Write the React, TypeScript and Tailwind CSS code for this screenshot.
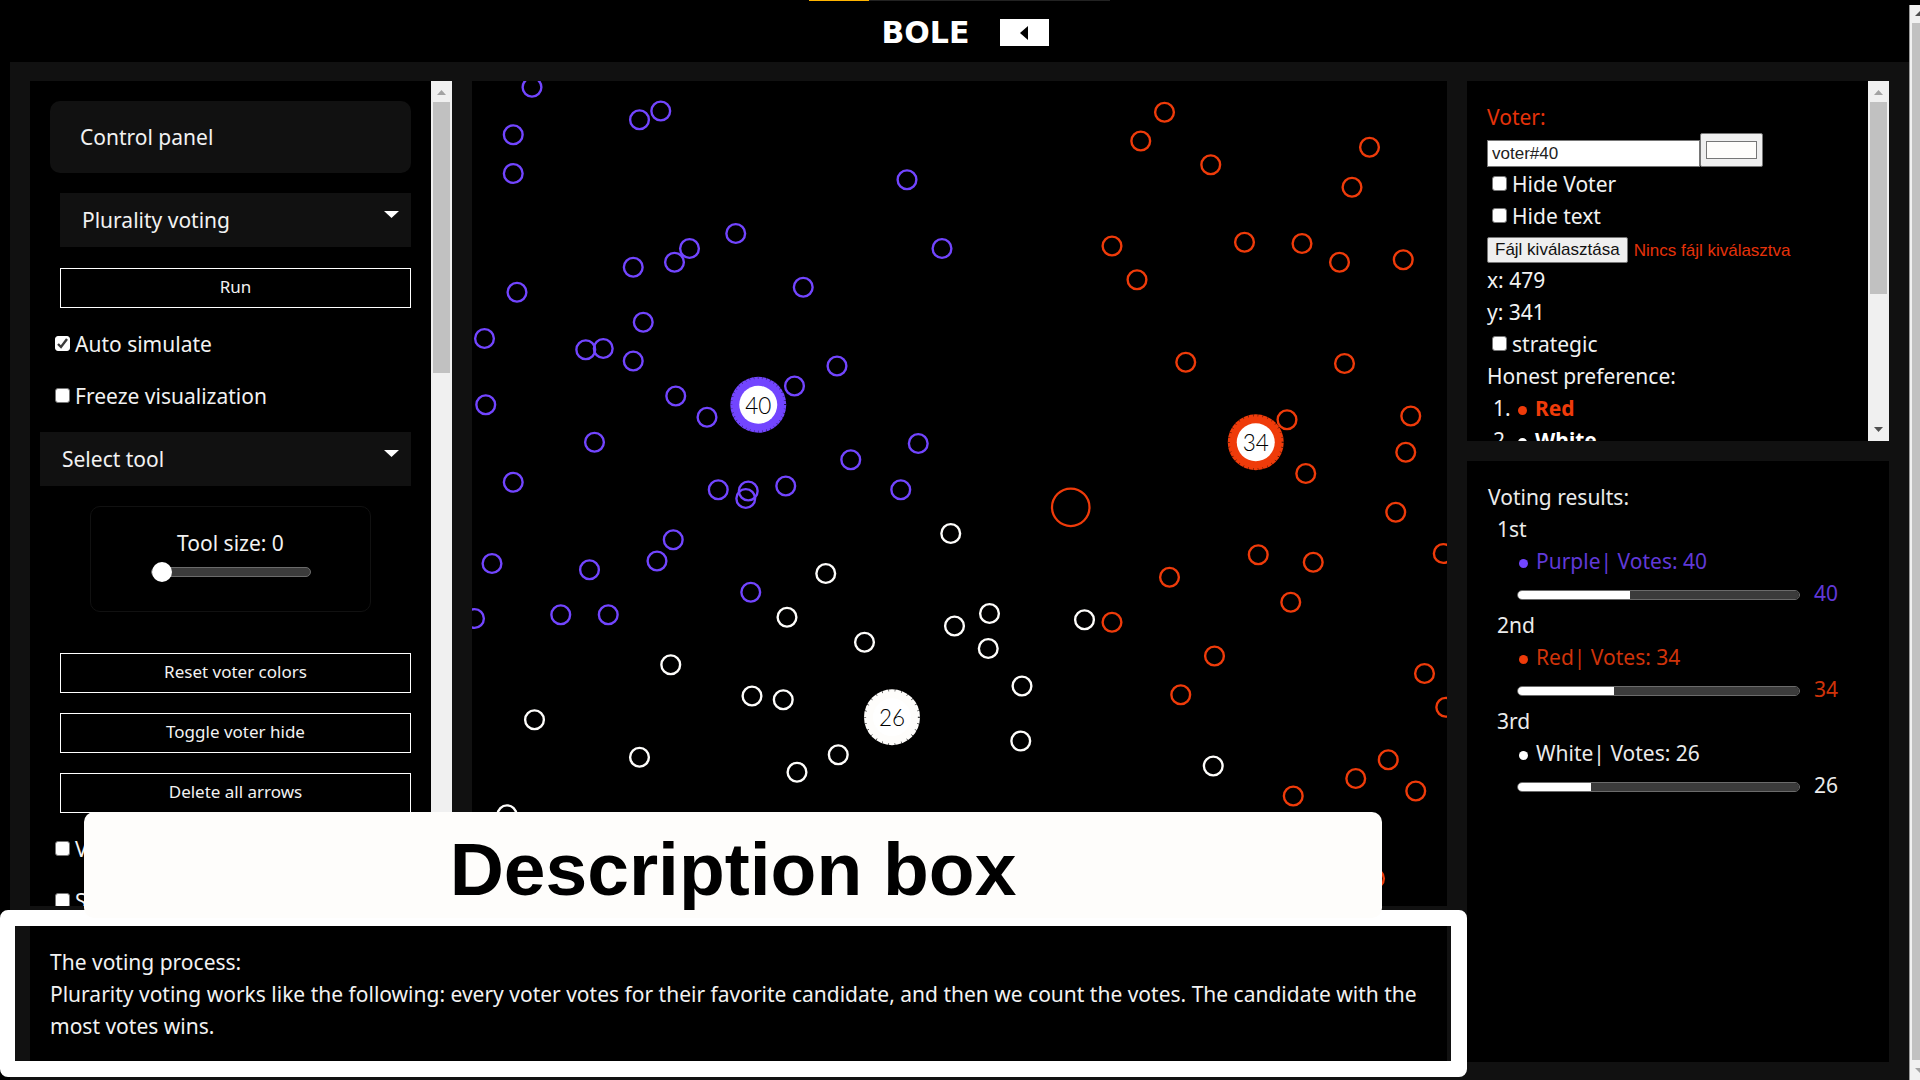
import { useId } from "react";

type Point = [number, number];

const PURPLE = "#7245ff";
const RED = "#ef3b0a";
const WHITE = "#fefdfb";

const purpleVoters: Point[] = [
  [48, 5], [134, 31], [151, 24], [33, 43], [33, 74], [348, 79], [211, 122], [174, 134], [162, 145],
  [129, 149], [376, 134], [36, 169], [265, 165], [137, 193], [10, 206], [91, 215], [105, 214],
  [129, 224], [292, 228], [258, 244], [163, 252], [188, 269], [11, 259], [98, 289], [357, 290],
  [303, 303], [33, 321], [197, 327], [221, 328], [219, 334], [251, 324], [343, 327], [161, 367],
  [148, 384], [16, 386], [94, 391], [223, 409], [2, 430], [71, 427], [109, 427],
];

const whiteVoters: Point[] = [
  [283, 394], [252, 429], [314, 449], [159, 467], [224, 492], [249, 495], [50, 511], [134, 541],
  [293, 539], [260, 553], [28, 587], [383, 362], [386, 436], [414, 426], [413, 454], [490, 431],
  [440, 484], [439, 528], [593, 548],
];

const redVoters: Point[] = [
  [554, 25], [535, 48], [591, 67], [718, 53], [704, 85], [512, 132], [532, 159], [618, 129],
  [664, 130], [694, 145], [745, 143], [571, 225], [698, 226], [652, 271], [751, 268], [747, 297],
  [667, 314], [739, 345], [629, 379], [673, 385], [777, 378], [558, 397], [655, 417], [512, 433],
  [594, 460], [567, 491], [762, 474], [779, 501], [733, 543], [707, 558], [755, 568], [657, 572],
  [722, 638],
];

function Voters({ points, color }: { points: Point[]; color: string }) {
  return (
    <g fill="none" stroke={color} strokeWidth={1.9}>
      {points.map(([x, y]) => (
        <circle key={`${x}-${y}`} cx={x} cy={y} r={7.5} />
      ))}
    </g>
  );
}

function Candidate({ x, y, votes, color }: { x: number; y: number; votes: number; color: string }) {
  return (
    <g>
      <circle cx={x} cy={y} r={22.4} fill={color} />
      <circle
        cx={x}
        cy={y}
        r={21.6}
        fill="none"
        stroke="#000"
        strokeWidth={1.8}
        pathLength={votes}
        strokeDasharray="0.08 0.92"
      />
      <circle cx={x} cy={y} r={15.2} fill="#fff" />
      <text
        x={x}
        y={y + 7}
        textAnchor="middle"
        fontFamily="Lato, sans-serif"
        fontWeight={300}
        fontSize={18}
        fill="#000"
      >
        {votes}
      </text>
    </g>
  );
}

function VoteMap() {
  return (
    <svg
      viewBox="0 0 780 660"
      preserveAspectRatio="xMinYMin slice"
      className="h-full w-full"
      role="img"
      aria-label="Voter map"
    >
      <Voters points={purpleVoters} color={PURPLE} />
      <Voters points={whiteVoters} color={WHITE} />
      <Voters points={redVoters} color={RED} />
      <circle cx={479} cy={341} r={15} fill="none" stroke={RED} strokeWidth={1.8} />
      <Candidate x={229} y={259} votes={40} color={PURPLE} />
      <Candidate x={627} y={289} votes={34} color={RED} />
      <Candidate x={336} y={509} votes={26} color={WHITE} />
    </svg>
  );
}

function CheckRow({ label, checked = false }: { label: string; checked?: boolean }) {
  return (
    <label className="ml-[5px] flex h-8 items-center gap-[5px]">
      <span className="relative -mt-0.5 size-[15px] shrink-0">
        <input
          type="checkbox"
          defaultChecked={checked}
          className="peer block size-[15px] appearance-none rounded-[3px] border border-[#767676] bg-white checked:border-white"
        />
        <svg
          viewBox="0 0 15 15"
          className="pointer-events-none absolute inset-0 hidden size-[15px] peer-checked:block"
        >
          <path d="M3 8l3 3 6-8" fill="none" stroke="#3b3b3b" strokeWidth={2.4} />
        </svg>
      </span>
      {label}
    </label>
  );
}

function Dropdown({ label, option }: { label: string; option: string }) {
  return (
    <div className="relative">
      <select
        aria-label={label}
        className="block h-[54px] w-full appearance-none bg-[#111] px-[22px] text-[21px]"
      >
        <option>{option}</option>
      </select>
      <svg
        viewBox="0 0 15 7"
        className="pointer-events-none absolute top-[18px] right-[12px] h-[7px] w-[15px]"
      >
        <path d="M0 0h15L7.500 7z" fill="#fff" />
      </svg>
    </div>
  );
}

function OutlineButton({ children }: { children: string }) {
  return (
    <button className="ml-[10px] h-10 border border-white pb-[2px] text-[17px]">{children}</button>
  );
}

function Scrollbar({ thumb, bottomArrow = false }: { thumb: string; bottomArrow?: boolean }) {
  return (
    <div className="flex w-[21px] shrink-0 flex-col items-center bg-[#f0f0f0] px-[2px]">
      <svg viewBox="0 0 21 21" className="size-[21px] shrink-0">
        <path d="M6 14h9l-4.500-5z" fill="#a3a3a3" />
      </svg>
      <div className={`w-full shrink-0 bg-[#c1c1c1] ${thumb}`} />
      {bottomArrow && (
        <svg viewBox="0 0 21 21" className="mt-auto size-[21px] shrink-0">
          <path d="M6 7h9l-4.500 5z" fill="#505050" />
        </svg>
      )}
    </div>
  );
}

function Dot({ className }: { className: string }) {
  return <span className={`mt-1 size-[9px] shrink-0 rounded-full ${className}`} />;
}

function ControlPanel() {
  const sizeId = useId();
  return (
    <section className="flex w-[422px] shrink-0 overflow-hidden bg-black">
      <div className="flex min-w-0 flex-1 flex-col px-5 pt-5 *:shrink-0">
        <h2 className="flex h-[72px] items-center rounded-[10px] bg-[#111] px-[30px]">
          Control panel
        </h2>
        <div className="mt-5 ml-[10px]">
          <Dropdown label="Voting system" option="Plurality voting" />
        </div>
        <div className="mt-[21px] flex flex-col">
          <OutlineButton>Run</OutlineButton>
        </div>
        <div className="mt-5 flex flex-col gap-5">
          <CheckRow label="Auto simulate" checked />
          <CheckRow label="Freeze visualization" />
        </div>
        <div className="mt-5 -ml-[10px]">
          <Dropdown label="Tool" option="Select tool" />
        </div>
        <div className="mx-10 mt-5 flex flex-col items-center rounded-[10px] border border-[#111] pt-5 pb-[29px]">
          <label htmlFor={sizeId}>Tool size: 0</label>
          <input
            id={sizeId}
            type="range"
            min={0}
            max={100}
            defaultValue={0}
            className="mt-[3px] h-5 w-40 appearance-none bg-transparent [&::-webkit-slider-runnable-track]:h-[10px] [&::-webkit-slider-runnable-track]:rounded-full [&::-webkit-slider-runnable-track]:border [&::-webkit-slider-runnable-track]:border-[#6b6b6b] [&::-webkit-slider-runnable-track]:bg-[#3b3b3b] [&::-webkit-slider-thumb]:-mt-[6px] [&::-webkit-slider-thumb]:size-5 [&::-webkit-slider-thumb]:appearance-none [&::-webkit-slider-thumb]:rounded-full [&::-webkit-slider-thumb]:bg-white"
          />
        </div>
        <div className="mt-[41px] flex flex-col gap-5">
          <OutlineButton>Reset voter colors</OutlineButton>
          <OutlineButton>Toggle voter hide</OutlineButton>
          <OutlineButton>Delete all arrows</OutlineButton>
        </div>
        <div className="mt-5 flex flex-col gap-5">
          <CheckRow label="V" />
          <CheckRow label="S" />
        </div>
      </div>
      <Scrollbar thumb="h-[271px]" />
    </section>
  );
}

function Preference({ rank, name, dot, color }: { rank: number; name: string; dot: string; color: string }) {
  return (
    <li className="ml-[6px] flex items-center">
      <span className="w-[25px]">{rank}.</span>
      <Dot className={dot} />
      <b className={`ml-2 ${color}`}>{name}</b>
    </li>
  );
}

function VoterPanel() {
  return (
    <section className="flex h-[360px] shrink-0 overflow-hidden bg-black">
      <div className="min-w-0 flex-1 overflow-hidden pt-5 pl-5">
        <p className="text-[#e5320a]">Voter:</p>
        <div className="flex h-[35px] items-end pb-px font-['Liberation_Sans',sans-serif]">
          <input
            type="text"
            aria-label="Voter name"
            defaultValue="voter#40"
            className="h-[27px] w-[213px] border border-[#767676] bg-white px-1 text-[17px] text-[#222]"
          />
          <input
            type="color"
            aria-label="Voter color"
            defaultValue="#fefdfb"
            className="h-[34px] w-[63px] appearance-none rounded-[2px] border border-[#767676] bg-[#efefef] px-[5px] py-[7px] [&::-webkit-color-swatch]:rounded-none [&::-webkit-color-swatch]:border-[#767676] [&::-webkit-color-swatch-wrapper]:p-0"
          />
        </div>
        <CheckRow label="Hide Voter" />
        <CheckRow label="Hide text" />
        <label className="flex h-8 items-end gap-[6px] pb-px font-['Liberation_Sans',sans-serif] text-[17px] leading-[24px]">
          <input type="file" className="sr-only" />
          <span className="h-[26px] rounded-[2px] border border-[#767676] bg-[#efefef] px-[7px] text-[#111]">
            Fájl kiválasztása
          </span>
          <span className="text-[#e5320a]">Nincs fájl kiválasztva</span>
        </label>
        <p>x: 479</p>
        <p>y: 341</p>
        <CheckRow label="strategic" />
        <p>Honest preference:</p>
        <ol>
          <Preference rank={1} name="Red" dot="bg-[#ef3b0a]" color="text-[#ef3b0a]" />
          <Preference rank={2} name="White" dot="bg-white" color="text-white" />
        </ol>
      </div>
      <Scrollbar thumb="h-[192px]" bottomArrow />
    </section>
  );
}

const results = [
  { place: "1st", name: "Purple", votes: 40, text: "text-[#6039d8]", dot: "bg-[#7245ff]" },
  { place: "2nd", name: "Red", votes: 34, text: "text-[#cf330a]", dot: "bg-[#ef3b0a]" },
  { place: "3rd", name: "White", votes: 26, text: "text-[#ebebeb]", dot: "bg-white" },
];

function ResultsPanel() {
  return (
    <section className="flex-1 bg-black pt-5 pl-[21px] text-[#ebebeb]">
      <h2>Voting results:</h2>
      {results.map((r) => (
        <div key={r.place} className="pl-[9px]">
          <h3>{r.place}</h3>
          <div className={`flex items-center gap-2 pl-[22px] ${r.text}`}>
            <Dot className={r.dot} />
            {r.name}| Votes: {r.votes}
          </div>
          <div className={`flex h-8 items-center gap-[14px] pl-[20px] ${r.text}`}>
            <progress
              aria-label={`${r.name} votes`}
              max={100}
              value={r.votes}
              className="mt-1 h-[10px] w-[283px] appearance-none overflow-hidden rounded-full border border-[#6b6b6b] [&::-webkit-progress-bar]:bg-[#3b3b3b] [&::-webkit-progress-value]:bg-white"
            />
            <span>{r.votes}</span>
          </div>
        </div>
      ))}
    </section>
  );
}

function Description() {
  return (
    <section className="relative shrink-0 bg-black px-5 py-5">
      <h2>The voting process:</h2>
      <p>
        Plurarity voting works like the following: every voter votes for their favorite candidate, and
        then we count the votes. The candidate with the most votes wins.
      </p>
      <div className="pointer-events-none absolute -top-4 -right-5 -bottom-[15px] -left-[30px] rounded-[8px] border-[16px] border-l-[15px] border-white" />
      <div className="absolute -top-[114px] right-[65px] left-[54px] flex h-[106px] items-center justify-center rounded-[10px] bg-[#fefdfb] pt-[7px] font-['Liberation_Sans',sans-serif] text-[75px] font-bold text-black">
        Description box
      </div>
    </section>
  );
}

function Header() {
  return (
    <header className="flex h-[62px] shrink-0 flex-col pl-[10px]">
      <div className="mx-auto h-px w-[301px] bg-[#222]">
        <div className="h-px w-1/5 bg-[#ffb400]" />
      </div>
      <div className="flex flex-1 items-center justify-center gap-5 pt-[2px] pl-px">
        <h1 className="w-[108px] text-center font-['DejaVu_Sans',sans-serif] text-[30px] leading-none font-bold text-white">
          BOLE
        </h1>
        <button aria-label="Collapse" className="flex h-[27px] w-[49px] items-center justify-center bg-white">
          <svg viewBox="0 0 8 14" className="h-[14px] w-[8px]">
            <path d="M8 0v14L0 7z" fill="#000" />
          </svg>
        </button>
      </div>
    </header>
  );
}

function PageScrollbar() {
  return (
    <div className="mt-[5px] flex w-[11px] shrink-0 flex-col overflow-hidden border-l border-[#999] bg-[#f1f1f1]">
      <svg viewBox="0 0 10 18" className="h-[18px] w-[10px] shrink-0">
        <path d="M5 11l5-5v5z" fill="#505050" />
      </svg>
      <div className="ml-[2px] flex-1 bg-[#c1c1c1]" />
      <svg viewBox="0 0 10 20" className="h-5 w-[10px] shrink-0">
        <path d="M5 8h5v5z" fill="#a3a3a3" />
      </svg>
    </div>
  );
}

export default function App() {
  return (
    <div className="flex h-screen overflow-hidden bg-black font-['Noto_Sans',sans-serif] text-[21px] leading-8 text-[#f2f2f2]">
      <div className="flex min-w-0 flex-1 flex-col">
        <Header />
        <main className="ml-[10px] flex min-h-0 flex-1 gap-5 bg-[#111] px-5 pt-[19px] pb-[18px]">
          <div className="flex min-w-0 flex-1 flex-col gap-5">
            <div className="flex min-h-0 flex-1 gap-5">
              <ControlPanel />
              <div className="min-w-0 flex-1 overflow-hidden bg-black">
                <VoteMap />
              </div>
            </div>
            <Description />
          </div>
          <div className="flex w-[422px] shrink-0 flex-col gap-5">
            <VoterPanel />
            <ResultsPanel />
          </div>
        </main>
      </div>
      <PageScrollbar />
    </div>
  );
}
